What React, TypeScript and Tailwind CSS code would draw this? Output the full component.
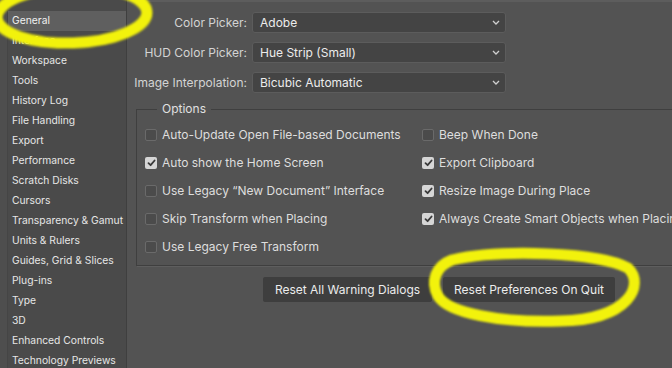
import React from 'react';

const sidebarItems = [
  'General',
  'Interface',
  'Workspace',
  'Tools',
  'History Log',
  'File Handling',
  'Export',
  'Performance',
  'Scratch Disks',
  'Cursors',
  'Transparency & Gamut',
  'Units & Rulers',
  'Guides, Grid & Slices',
  'Plug-ins',
  'Type',
  '3D',
  'Enhanced Controls',
  'Technology Previews',
];

const selects = [
  { label: 'Color Picker:', value: 'Adobe' },
  { label: 'HUD Color Picker:', value: 'Hue Strip (Small)' },
  { label: 'Image Interpolation:', value: 'Bicubic Automatic' },
];

const leftOptions = [
  { label: 'Auto-Update Open File-based Documents', checked: false },
  { label: 'Auto show the Home Screen', checked: true },
  { label: 'Use Legacy \u201CNew Document\u201D Interface', checked: false },
  { label: 'Skip Transform when Placing', checked: false },
  { label: 'Use Legacy Free Transform', checked: false },
];

const rightOptions = [
  { label: 'Beep When Done', checked: false },
  { label: 'Export Clipboard', checked: true },
  { label: 'Resize Image During Place', checked: true },
  { label: 'Always Create Smart Objects when Placing', checked: true },
];

function Checkbox({ checked }: { checked: boolean }) {
  if (checked) {
    return (
      <span className="w-[12px] h-[12px] shrink-0 rounded-[2px] bg-[#d6d6d6] flex items-center justify-center">
        <svg width="9" height="8" viewBox="0 0 9 8">
          <path d="M1.5 4.2 3.6 6.2 7.6 1.5" fill="none" stroke="#3a3a3a" strokeWidth="1.8" strokeLinecap="round" strokeLinejoin="round" />
        </svg>
      </span>
    );
  }
  return <span className="w-[12px] h-[12px] shrink-0 rounded-[2px] border border-[#6a6a6a] bg-[#4b4b4b]" />;
}

function Option({ label, checked }: { label: string; checked: boolean }) {
  return (
    <div className="h-[28px] flex items-center gap-[5px] whitespace-nowrap">
      <Checkbox checked={checked} />
      <span className="text-[12px] text-[#dedede]">{label}</span>
    </div>
  );
}

export default function App() {
  return (
    <div
      className="relative w-[672px] h-[368px] overflow-hidden flex bg-[#535353]"
      style={{ fontFamily: 'Inter, "Noto Sans", sans-serif' }}
    >
      <div className="w-[8px] shrink-0 bg-[#4e4e4e] border-r border-[#454545]" />

      {/* sidebar */}
      <div className="w-[119px] shrink-0 bg-[#4a4a4a] border-r border-[#3f3f3f] pt-[11px]">
        {sidebarItems.map((item, i) => (
          <div
            key={item}
            className={`h-[20px] flex items-center pl-[4px] text-[10.3px] whitespace-nowrap ${
              i === 0 ? 'bg-[#5f5f5f] text-[#f0f0f0]' : 'text-[#e6e6e6]'
            }`}
          >
            {item}
          </div>
        ))}
      </div>

      {/* main */}
      <div className="flex-1 min-w-0 border-t-2 border-[#5d5d5d] pt-[10px]">
        <div className="flex flex-col gap-[9px]">
          {selects.map((s) => (
            <div key={s.label} className="flex items-center h-[21px]">
              <span className="w-[120px] shrink-0 text-right text-[12px] text-[#d4d4d4] whitespace-nowrap">{s.label}</span>
              <div className="ml-[5px] w-[254px] h-[21px] rounded-[3px] bg-[#444444] border border-[#5c5c5c] flex items-center justify-between pl-[7px] pr-[5px]">
                <span className="text-[12px] text-[#ececec]">{s.value}</span>
                <svg width="8" height="5" viewBox="0 0 8 5">
                  <path d="M1 1 4 4 7 1" fill="none" stroke="#cfcfcf" strokeWidth="1.3" />
                </svg>
              </div>
            </div>
          ))}
        </div>

        <fieldset className="ml-[9px] mt-[8px] w-[580px] border border-[#3f3f3f] shadow-[1px_1px_0_#5e5e5e] pl-[8px] pb-[4px]">
          <legend className="ml-[12px] px-[5px] text-[12px] leading-[16px] text-[#e0e0e0]">Options</legend>
          <div className="pt-[4px] grid grid-cols-[277px_auto]">
            <div className="flex flex-col">
              {leftOptions.map((o) => (
                <Option key={o.label} {...o} />
              ))}
            </div>
            <div className="flex flex-col">
              {rightOptions.map((o) => (
                <Option key={o.label} {...o} />
              ))}
            </div>
          </div>
        </fieldset>

        <div className="mt-[11px] ml-[136px] flex gap-[11px]">
          <button className="w-[169px] h-[25px] bg-[#3e3e3e] rounded-[2px] text-[12px] text-[#ececec] whitespace-nowrap">
            Reset All Warning Dialogs
          </button>
          <button className="w-[172px] h-[25px] bg-[#3e3e3e] rounded-[2px] text-[12px] text-[#ececec] whitespace-nowrap">
            Reset Preferences On Quit
          </button>
        </div>
      </div>

      {/* yellow highlighter annotations */}
      <svg className="absolute inset-0 pointer-events-none" width="672" height="368" viewBox="0 0 672 368">
        <g fill="none" stroke="#f2f20c" strokeLinecap="round" style={{ filter: 'blur(0.8px)' }}>
          <ellipse cx="72" cy="15" rx="75" ry="28" strokeWidth="11" transform="rotate(-2 72 15)" />
          <path
            d="M452 260 C 500 249, 600 252, 628 268 C 645 284, 630 320, 560 321 C 500 323, 448 313, 438 296 C 430 281, 436 266, 452 260 Z"
            strokeWidth="11"
          />
        </g>
      </svg>
    </div>
  );
}
